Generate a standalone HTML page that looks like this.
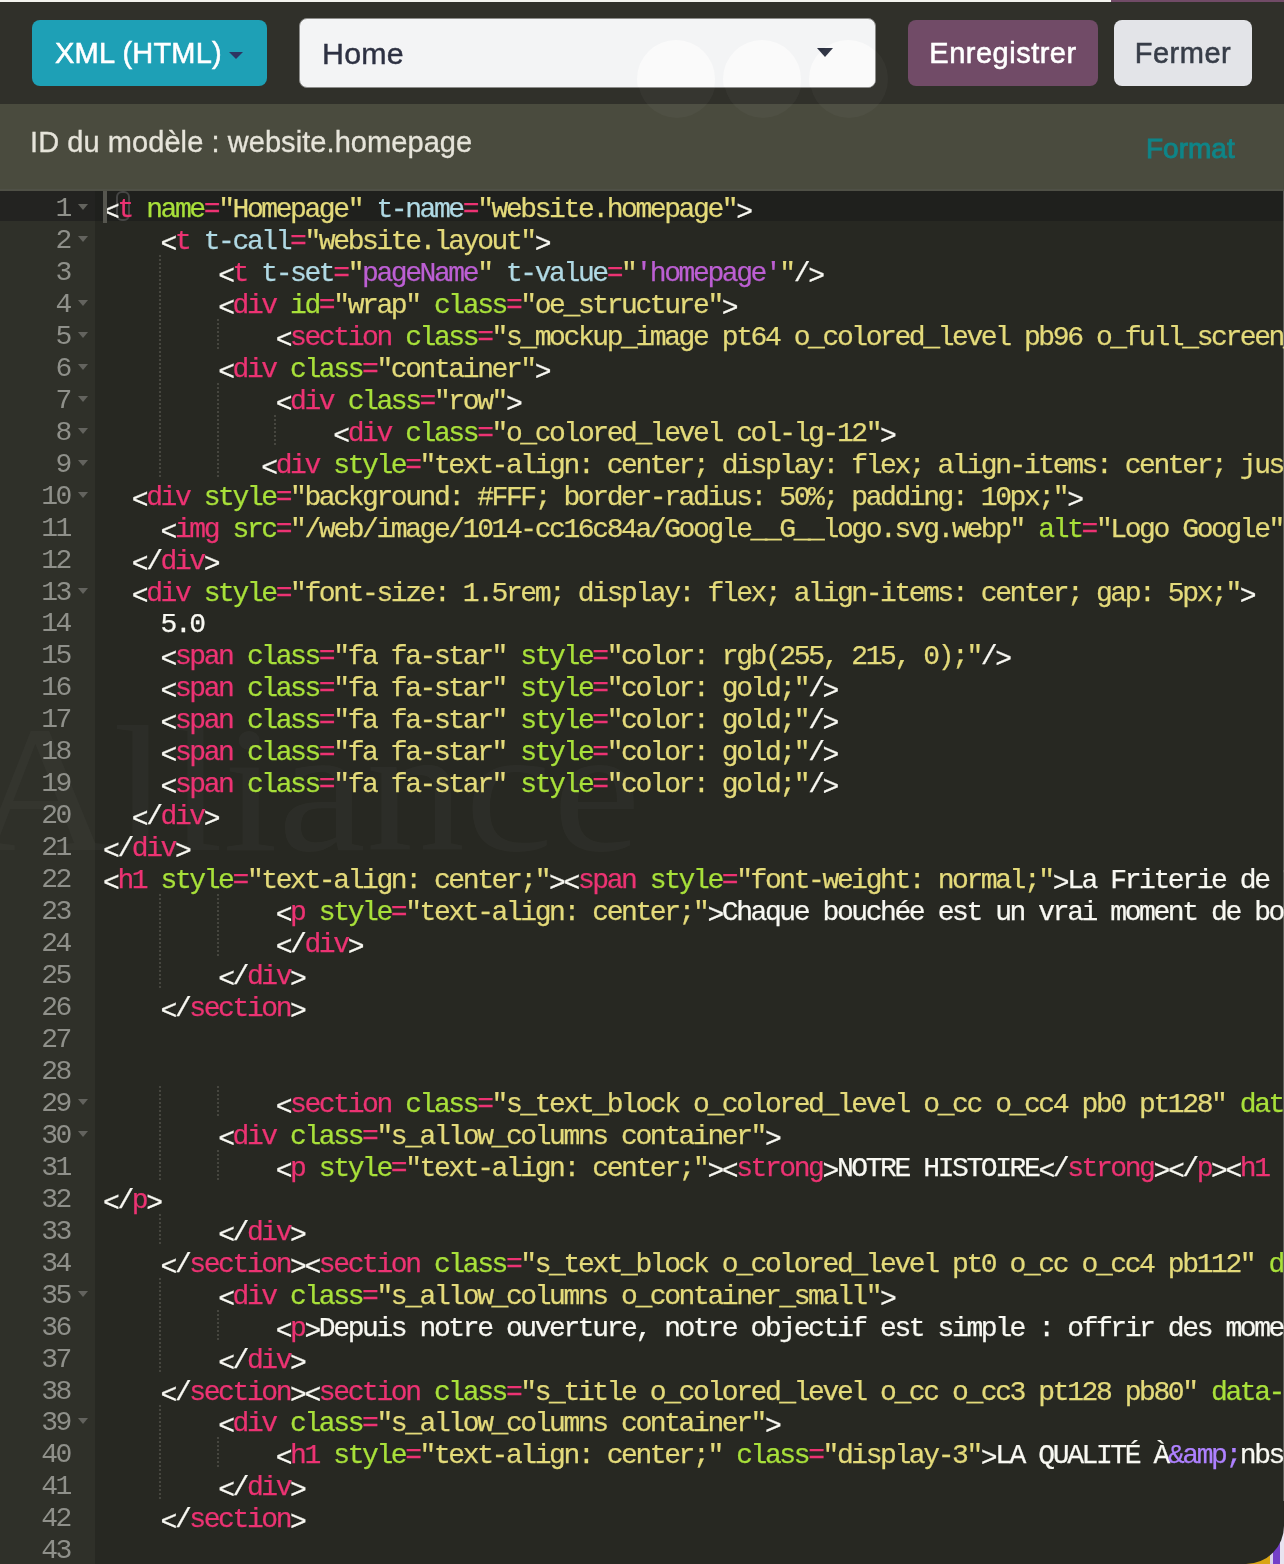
<!DOCTYPE html>
<html><head><meta charset="utf-8">
<style>
html,body{margin:0;padding:0;}
body{width:1284px;height:1564px;overflow:hidden;position:relative;background:#272822;font-family:"Liberation Sans",sans-serif;}
.top{position:absolute;left:0;top:0;width:1284px;height:104px;background:#30302a;}
.sub{position:absolute;left:0;top:104px;width:1284px;height:87px;background:#4a4b3e;}
.subline{position:absolute;left:0;top:189px;width:1284px;height:2px;background:#4f5046;}
.btn{position:absolute;top:20px;height:66px;border-radius:8px;box-sizing:border-box;font-size:29px;line-height:66px;-webkit-text-stroke:0.55px currentColor;}
.b1{left:32px;width:235px;background:#1ea0b6;color:#fff;}
.b1 .lbl{position:absolute;left:23px;top:0;letter-spacing:0.2px;will-change:transform;}
.caret{position:absolute;width:0;height:0;border-left:7px solid transparent;border-right:7px solid transparent;border-top:7px solid #3a3f6a;}
.sel{position:absolute;left:299px;top:18px;width:577px;height:70px;border-radius:8px;background:#f3f4f5;box-sizing:border-box;border:1.5px solid #8c8c8a;overflow:hidden;}
.sel .lbl{position:absolute;left:22px;top:1.5px;line-height:66px;font-size:29px;letter-spacing:0.2px;transform:scaleX(1.047);transform-origin:0 0;color:#2d3142;-webkit-text-stroke:0.4px currentColor;will-change:transform;}
.b2{left:908px;width:190px;background:#714b67;color:#fff;}
.b3{left:1114px;width:138px;background:#e3e4e8;color:#373d48;}
.b2 .lbl,.b3 .lbl{position:absolute;left:0;right:0;text-align:center;letter-spacing:0.5px;will-change:transform;}
.mid{position:absolute;left:30px;top:104px;height:86px;line-height:76px;font-size:29px;letter-spacing:0.07px;color:#e6e4da;-webkit-text-stroke:0.3px currentColor;will-change:transform;}
.fmt{position:absolute;left:1146px;top:104px;height:86px;line-height:90px;font-size:28px;color:#0f8588;-webkit-text-stroke:0.9px currentColor;will-change:transform;}
.gut{position:absolute;left:0;top:191px;width:95px;height:1373px;background:#2f3029;}
.act{position:absolute;left:0;top:191px;width:1284px;height:30px;background:#1f201d;}
.actg{position:absolute;left:0;top:191px;width:95px;height:30px;background:#232321;}
.ln{position:absolute;left:0;width:70px;margin-top:2px;text-align:right;height:32px;line-height:32px;font-family:"Liberation Mono",monospace;font-size:28px;letter-spacing:-2.4px;color:#8f908a;will-change:transform;}
.fd{position:absolute;left:78px;width:0;height:0;margin-top:13px;border-left:5px solid transparent;border-right:5px solid transparent;border-top:6px solid #63635e;}
:root{--x0:103px;--cw:14.387px;}
.cl{position:absolute;left:var(--x0);margin-top:3px;height:32px;line-height:32px;font-family:"Liberation Mono",monospace;font-size:28px;letter-spacing:-2.413px;white-space:pre;color:#F8F8F2;-webkit-text-stroke:0.25px currentColor;will-change:transform;}
.p{color:#F8F8F2}.t{color:#EC3373}.a{color:#A8E03A}.s{color:#E4DA7A}.ta{color:#B0D9E4}.pu{color:#BC5FD3}.am{color:#AE81FF}.x{color:#F8F8F2}.lt{position:relative;top:2.5px}
.ig{position:absolute;width:2px;background:repeating-linear-gradient(to bottom,#46463f 0,#46463f 2px,transparent 2px,transparent 4px);}
.cursor{position:absolute;left:103px;top:191px;width:3.5px;height:32px;background:#56564f;}
.bbox{position:absolute;left:116px;top:191px;width:14px;height:30px;box-sizing:border-box;border:2px solid #464645;border-radius:6px;}
.topline{position:absolute;left:0;top:0;width:1111px;height:2px;background:#f3f3ee;}
.topline2{position:absolute;left:1111px;top:0;width:173px;height:2px;background:#714b67;}
.bgtxt{position:absolute;left:-30px;top:690px;font-family:"Liberation Serif",serif;font-size:180px;line-height:200px;color:rgba(255,255,255,0.028);white-space:nowrap;transform:scaleX(1.1);transform-origin:0 0;}
.ci{position:absolute;top:20.5px;width:78px;height:78px;border-radius:50%;background:#fafafa;}
.circ{position:absolute;width:78px;height:78px;border-radius:50%;top:40px;background:rgba(255,255,255,0.03)}
</style></head><body>
<div class="top"></div>
<div class="topline"></div><div class="topline2"></div>
<div class="btn b1"><span class="lbl">XML (HTML)</span><span class="caret" style="left:197px;top:32px;border-left-width:7.5px;border-right-width:7.5px;border-top:7.5px solid #2e3562"></span></div>
<div class="sel"><div class="ci" style="left:337px"></div><div class="ci" style="left:423px"></div><div class="ci" style="left:509px"></div><span class="lbl">Home</span><span class="caret" style="left:517px;top:29px;border-left-width:8px;border-right-width:8px;border-top:9px solid #2b3040"></span></div>
<div class="btn b2"><span class="lbl">Enregistrer</span></div>
<div class="btn b3"><span class="lbl">Fermer</span></div>
<div class="sub"></div>
<div class="subline"></div>
<div class="mid">ID du modèle : website.homepage</div>
<div class="fmt">Format</div>
<div class="circ" style="left:638px"></div>
<div class="circ" style="left:724px"></div>
<div class="circ" style="left:810px"></div>
<div class="gut"></div>
<div class="act"></div><div class="actg"></div>
<div class="bgtxt">Alliance</div>
<div class="bbox"></div>
<div class="ig" style="left:calc(var(--x0) + 4 * var(--cw) - 1.5px);top:254.92px;height:31.96px"></div>
<div class="ig" style="left:calc(var(--x0) + 4 * var(--cw) - 1.5px);top:286.88px;height:31.96px"></div>
<div class="ig" style="left:calc(var(--x0) + 4 * var(--cw) - 1.5px);top:318.84px;height:31.96px"></div>
<div class="ig" style="left:calc(var(--x0) + 8 * var(--cw) - 1.5px);top:318.84px;height:31.96px"></div>
<div class="ig" style="left:calc(var(--x0) + 4 * var(--cw) - 1.5px);top:350.80px;height:31.96px"></div>
<div class="ig" style="left:calc(var(--x0) + 4 * var(--cw) - 1.5px);top:382.76px;height:31.96px"></div>
<div class="ig" style="left:calc(var(--x0) + 8 * var(--cw) - 1.5px);top:382.76px;height:31.96px"></div>
<div class="ig" style="left:calc(var(--x0) + 4 * var(--cw) - 1.5px);top:414.72px;height:31.96px"></div>
<div class="ig" style="left:calc(var(--x0) + 8 * var(--cw) - 1.5px);top:414.72px;height:31.96px"></div>
<div class="ig" style="left:calc(var(--x0) + 12 * var(--cw) - 1.5px);top:414.72px;height:31.96px"></div>
<div class="ig" style="left:calc(var(--x0) + 4 * var(--cw) - 1.5px);top:446.68px;height:31.96px"></div>
<div class="ig" style="left:calc(var(--x0) + 8 * var(--cw) - 1.5px);top:446.68px;height:31.96px"></div>
<div class="ig" style="left:calc(var(--x0) + 4 * var(--cw) - 1.5px);top:894.12px;height:31.96px"></div>
<div class="ig" style="left:calc(var(--x0) + 8 * var(--cw) - 1.5px);top:894.12px;height:31.96px"></div>
<div class="ig" style="left:calc(var(--x0) + 4 * var(--cw) - 1.5px);top:926.08px;height:31.96px"></div>
<div class="ig" style="left:calc(var(--x0) + 8 * var(--cw) - 1.5px);top:926.08px;height:31.96px"></div>
<div class="ig" style="left:calc(var(--x0) + 4 * var(--cw) - 1.5px);top:958.04px;height:31.96px"></div>
<div class="ig" style="left:calc(var(--x0) + 4 * var(--cw) - 1.5px);top:1085.88px;height:31.96px"></div>
<div class="ig" style="left:calc(var(--x0) + 8 * var(--cw) - 1.5px);top:1085.88px;height:31.96px"></div>
<div class="ig" style="left:calc(var(--x0) + 4 * var(--cw) - 1.5px);top:1117.84px;height:31.96px"></div>
<div class="ig" style="left:calc(var(--x0) + 4 * var(--cw) - 1.5px);top:1149.80px;height:31.96px"></div>
<div class="ig" style="left:calc(var(--x0) + 8 * var(--cw) - 1.5px);top:1149.80px;height:31.96px"></div>
<div class="ig" style="left:calc(var(--x0) + 4 * var(--cw) - 1.5px);top:1213.72px;height:31.96px"></div>
<div class="ig" style="left:calc(var(--x0) + 4 * var(--cw) - 1.5px);top:1277.64px;height:31.96px"></div>
<div class="ig" style="left:calc(var(--x0) + 4 * var(--cw) - 1.5px);top:1309.60px;height:31.96px"></div>
<div class="ig" style="left:calc(var(--x0) + 8 * var(--cw) - 1.5px);top:1309.60px;height:31.96px"></div>
<div class="ig" style="left:calc(var(--x0) + 4 * var(--cw) - 1.5px);top:1341.56px;height:31.96px"></div>
<div class="ig" style="left:calc(var(--x0) + 4 * var(--cw) - 1.5px);top:1405.48px;height:31.96px"></div>
<div class="ig" style="left:calc(var(--x0) + 4 * var(--cw) - 1.5px);top:1437.44px;height:31.96px"></div>
<div class="ig" style="left:calc(var(--x0) + 8 * var(--cw) - 1.5px);top:1437.44px;height:31.96px"></div>
<div class="ig" style="left:calc(var(--x0) + 4 * var(--cw) - 1.5px);top:1469.40px;height:31.96px"></div>
<div class="ln" style="top:191.00px">1</div>
<div class="fd" style="top:191.00px"></div>
<div class="cl" style="top:191.00px"><span class="p lt">&lt;</span><span class="t">t</span><span class="p"> </span><span class="a">name</span><span class="t">=</span><span class="s">"Homepage"</span><span class="p"> </span><span class="ta">t-name</span><span class="t">=</span><span class="s">"website.homepage"</span><span class="p lt">&gt;</span></div>
<div class="ln" style="top:222.96px">2</div>
<div class="fd" style="top:222.96px"></div>
<div class="cl" style="top:222.96px">    <span class="p lt">&lt;</span><span class="t">t</span><span class="p"> </span><span class="ta">t-call</span><span class="t">=</span><span class="s">"website.layout"</span><span class="p lt">&gt;</span></div>
<div class="ln" style="top:254.92px">3</div>
<div class="cl" style="top:254.92px">        <span class="p lt">&lt;</span><span class="t">t</span><span class="p"> </span><span class="ta">t-set</span><span class="t">=</span><span class="s">"</span><span class="pu">pageName</span><span class="s">"</span><span class="p"> </span><span class="ta">t-value</span><span class="t">=</span><span class="s">"</span><span class="pu">'homepage'</span><span class="s">"</span><span class="p">/</span><span class="p lt">&gt;</span></div>
<div class="ln" style="top:286.88px">4</div>
<div class="fd" style="top:286.88px"></div>
<div class="cl" style="top:286.88px">        <span class="p lt">&lt;</span><span class="t">div</span><span class="p"> </span><span class="a">id</span><span class="t">=</span><span class="s">"wrap"</span><span class="p"> </span><span class="a">class</span><span class="t">=</span><span class="s">"oe_structure"</span><span class="p lt">&gt;</span></div>
<div class="ln" style="top:318.84px">5</div>
<div class="fd" style="top:318.84px"></div>
<div class="cl" style="top:318.84px">            <span class="p lt">&lt;</span><span class="t">section</span><span class="p"> </span><span class="a">class</span><span class="t">=</span><span class="s">"s_mockup_image pt64 o_colored_level pb96 o_full_screen_height</span></div>
<div class="ln" style="top:350.80px">6</div>
<div class="fd" style="top:350.80px"></div>
<div class="cl" style="top:350.80px">        <span class="p lt">&lt;</span><span class="t">div</span><span class="p"> </span><span class="a">class</span><span class="t">=</span><span class="s">"container"</span><span class="p lt">&gt;</span></div>
<div class="ln" style="top:382.76px">7</div>
<div class="fd" style="top:382.76px"></div>
<div class="cl" style="top:382.76px">            <span class="p lt">&lt;</span><span class="t">div</span><span class="p"> </span><span class="a">class</span><span class="t">=</span><span class="s">"row"</span><span class="p lt">&gt;</span></div>
<div class="ln" style="top:414.72px">8</div>
<div class="fd" style="top:414.72px"></div>
<div class="cl" style="top:414.72px">                <span class="p lt">&lt;</span><span class="t">div</span><span class="p"> </span><span class="a">class</span><span class="t">=</span><span class="s">"o_colored_level col-lg-12"</span><span class="p lt">&gt;</span></div>
<div class="ln" style="top:446.68px">9</div>
<div class="fd" style="top:446.68px"></div>
<div class="cl" style="top:446.68px">           <span class="p lt">&lt;</span><span class="t">div</span><span class="p"> </span><span class="a">style</span><span class="t">=</span><span class="s">"text-align: center; display: flex; align-items: center; justify</span></div>
<div class="ln" style="top:478.64px">10</div>
<div class="fd" style="top:478.64px"></div>
<div class="cl" style="top:478.64px">  <span class="p lt">&lt;</span><span class="t">div</span><span class="p"> </span><span class="a">style</span><span class="t">=</span><span class="s">"background: #FFF; border-radius: 50%; padding: 10px;"</span><span class="p lt">&gt;</span></div>
<div class="ln" style="top:510.60px">11</div>
<div class="cl" style="top:510.60px">    <span class="p lt">&lt;</span><span class="t">img</span><span class="p"> </span><span class="a">src</span><span class="t">=</span><span class="s">"/web/image/1014-cc16c84a/Google__G__logo.svg.webp"</span><span class="p"> </span><span class="a">alt</span><span class="t">=</span><span class="s">"Logo Google"</span><span class="p"> </span></div>
<div class="ln" style="top:542.56px">12</div>
<div class="cl" style="top:542.56px">  <span class="p lt">&lt;</span><span class="p">/</span><span class="t">div</span><span class="p lt">&gt;</span></div>
<div class="ln" style="top:574.52px">13</div>
<div class="fd" style="top:574.52px"></div>
<div class="cl" style="top:574.52px">  <span class="p lt">&lt;</span><span class="t">div</span><span class="p"> </span><span class="a">style</span><span class="t">=</span><span class="s">"font-size: 1.5rem; display: flex; align-items: center; gap: 5px;"</span><span class="p lt">&gt;</span></div>
<div class="ln" style="top:606.48px">14</div>
<div class="cl" style="top:606.48px">    <span class="x">5.0</span></div>
<div class="ln" style="top:638.44px">15</div>
<div class="cl" style="top:638.44px">    <span class="p lt">&lt;</span><span class="t">span</span><span class="p"> </span><span class="a">class</span><span class="t">=</span><span class="s">"fa fa-star"</span><span class="p"> </span><span class="a">style</span><span class="t">=</span><span class="s">"color: rgb(255, 215, 0);"</span><span class="p">/</span><span class="p lt">&gt;</span></div>
<div class="ln" style="top:670.40px">16</div>
<div class="cl" style="top:670.40px">    <span class="p lt">&lt;</span><span class="t">span</span><span class="p"> </span><span class="a">class</span><span class="t">=</span><span class="s">"fa fa-star"</span><span class="p"> </span><span class="a">style</span><span class="t">=</span><span class="s">"color: gold;"</span><span class="p">/</span><span class="p lt">&gt;</span></div>
<div class="ln" style="top:702.36px">17</div>
<div class="cl" style="top:702.36px">    <span class="p lt">&lt;</span><span class="t">span</span><span class="p"> </span><span class="a">class</span><span class="t">=</span><span class="s">"fa fa-star"</span><span class="p"> </span><span class="a">style</span><span class="t">=</span><span class="s">"color: gold;"</span><span class="p">/</span><span class="p lt">&gt;</span></div>
<div class="ln" style="top:734.32px">18</div>
<div class="cl" style="top:734.32px">    <span class="p lt">&lt;</span><span class="t">span</span><span class="p"> </span><span class="a">class</span><span class="t">=</span><span class="s">"fa fa-star"</span><span class="p"> </span><span class="a">style</span><span class="t">=</span><span class="s">"color: gold;"</span><span class="p">/</span><span class="p lt">&gt;</span></div>
<div class="ln" style="top:766.28px">19</div>
<div class="cl" style="top:766.28px">    <span class="p lt">&lt;</span><span class="t">span</span><span class="p"> </span><span class="a">class</span><span class="t">=</span><span class="s">"fa fa-star"</span><span class="p"> </span><span class="a">style</span><span class="t">=</span><span class="s">"color: gold;"</span><span class="p">/</span><span class="p lt">&gt;</span></div>
<div class="ln" style="top:798.24px">20</div>
<div class="cl" style="top:798.24px">  <span class="p lt">&lt;</span><span class="p">/</span><span class="t">div</span><span class="p lt">&gt;</span></div>
<div class="ln" style="top:830.20px">21</div>
<div class="cl" style="top:830.20px"><span class="p lt">&lt;</span><span class="p">/</span><span class="t">div</span><span class="p lt">&gt;</span></div>
<div class="ln" style="top:862.16px">22</div>
<div class="cl" style="top:862.16px"><span class="p lt">&lt;</span><span class="t">h1</span><span class="p"> </span><span class="a">style</span><span class="t">=</span><span class="s">"text-align: center;"</span><span class="p lt">&gt;</span><span class="p lt">&lt;</span><span class="t">span</span><span class="p"> </span><span class="a">style</span><span class="t">=</span><span class="s">"font-weight: normal;"</span><span class="x lt">&gt;</span><span class="x">La Friterie de Tours</span></div>
<div class="ln" style="top:894.12px">23</div>
<div class="cl" style="top:894.12px">            <span class="p lt">&lt;</span><span class="t">p</span><span class="p"> </span><span class="a">style</span><span class="t">=</span><span class="s">"text-align: center;"</span><span class="x lt">&gt;</span><span class="x">Chaque bouchée est un vrai moment de bonheur</span></div>
<div class="ln" style="top:926.08px">24</div>
<div class="cl" style="top:926.08px">            <span class="p lt">&lt;</span><span class="p">/</span><span class="t">div</span><span class="p lt">&gt;</span></div>
<div class="ln" style="top:958.04px">25</div>
<div class="cl" style="top:958.04px">        <span class="p lt">&lt;</span><span class="p">/</span><span class="t">div</span><span class="p lt">&gt;</span></div>
<div class="ln" style="top:990.00px">26</div>
<div class="cl" style="top:990.00px">    <span class="p lt">&lt;</span><span class="p">/</span><span class="t">section</span><span class="p lt">&gt;</span></div>
<div class="ln" style="top:1021.96px">27</div>
<div class="cl" style="top:1021.96px"></div>
<div class="ln" style="top:1053.92px">28</div>
<div class="cl" style="top:1053.92px"></div>
<div class="ln" style="top:1085.88px">29</div>
<div class="fd" style="top:1085.88px"></div>
<div class="cl" style="top:1085.88px">            <span class="p lt">&lt;</span><span class="t">section</span><span class="p"> </span><span class="a">class</span><span class="t">=</span><span class="s">"s_text_block o_colored_level o_cc o_cc4 pb0 pt128"</span><span class="p"> </span><span class="a">data-n</span></div>
<div class="ln" style="top:1117.84px">30</div>
<div class="fd" style="top:1117.84px"></div>
<div class="cl" style="top:1117.84px">        <span class="p lt">&lt;</span><span class="t">div</span><span class="p"> </span><span class="a">class</span><span class="t">=</span><span class="s">"s_allow_columns container"</span><span class="p lt">&gt;</span></div>
<div class="ln" style="top:1149.80px">31</div>
<div class="cl" style="top:1149.80px">            <span class="p lt">&lt;</span><span class="t">p</span><span class="p"> </span><span class="a">style</span><span class="t">=</span><span class="s">"text-align: center;"</span><span class="p lt">&gt;</span><span class="p lt">&lt;</span><span class="t">strong</span><span class="x lt">&gt;</span><span class="x">NOTRE HISTOIRE</span><span class="p lt">&lt;</span><span class="p">/</span><span class="t">strong</span><span class="p lt">&gt;</span><span class="p lt">&lt;</span><span class="p">/</span><span class="t">p</span><span class="p lt">&gt;</span><span class="p lt">&lt;</span><span class="t">h1</span><span class="p"> </span></div>
<div class="ln" style="top:1181.76px">32</div>
<div class="cl" style="top:1181.76px"><span class="p lt">&lt;</span><span class="p">/</span><span class="t">p</span><span class="p lt">&gt;</span></div>
<div class="ln" style="top:1213.72px">33</div>
<div class="cl" style="top:1213.72px">        <span class="p lt">&lt;</span><span class="p">/</span><span class="t">div</span><span class="p lt">&gt;</span></div>
<div class="ln" style="top:1245.68px">34</div>
<div class="cl" style="top:1245.68px">    <span class="p lt">&lt;</span><span class="p">/</span><span class="t">section</span><span class="p lt">&gt;</span><span class="p lt">&lt;</span><span class="t">section</span><span class="p"> </span><span class="a">class</span><span class="t">=</span><span class="s">"s_text_block o_colored_level pt0 o_cc o_cc4 pb112"</span><span class="p"> </span><span class="a">data-n</span></div>
<div class="ln" style="top:1277.64px">35</div>
<div class="fd" style="top:1277.64px"></div>
<div class="cl" style="top:1277.64px">        <span class="p lt">&lt;</span><span class="t">div</span><span class="p"> </span><span class="a">class</span><span class="t">=</span><span class="s">"s_allow_columns o_container_small"</span><span class="p lt">&gt;</span></div>
<div class="ln" style="top:1309.60px">36</div>
<div class="cl" style="top:1309.60px">            <span class="p lt">&lt;</span><span class="t">p</span><span class="x lt">&gt;</span><span class="x">Depuis notre ouverture, notre objectif est simple : offrir des moments</span></div>
<div class="ln" style="top:1341.56px">37</div>
<div class="cl" style="top:1341.56px">        <span class="p lt">&lt;</span><span class="p">/</span><span class="t">div</span><span class="p lt">&gt;</span></div>
<div class="ln" style="top:1373.52px">38</div>
<div class="cl" style="top:1373.52px">    <span class="p lt">&lt;</span><span class="p">/</span><span class="t">section</span><span class="p lt">&gt;</span><span class="p lt">&lt;</span><span class="t">section</span><span class="p"> </span><span class="a">class</span><span class="t">=</span><span class="s">"s_title o_colored_level o_cc o_cc3 pt128 pb80"</span><span class="p"> </span><span class="a">data-n</span></div>
<div class="ln" style="top:1405.48px">39</div>
<div class="fd" style="top:1405.48px"></div>
<div class="cl" style="top:1405.48px">        <span class="p lt">&lt;</span><span class="t">div</span><span class="p"> </span><span class="a">class</span><span class="t">=</span><span class="s">"s_allow_columns container"</span><span class="p lt">&gt;</span></div>
<div class="ln" style="top:1437.44px">40</div>
<div class="cl" style="top:1437.44px">            <span class="p lt">&lt;</span><span class="t">h1</span><span class="p"> </span><span class="a">style</span><span class="t">=</span><span class="s">"text-align: center;"</span><span class="p"> </span><span class="a">class</span><span class="t">=</span><span class="s">"display-3"</span><span class="x lt">&gt;</span><span class="x">LA QUALITÉ À</span><span class="am">&amp;amp;</span><span class="x">nbsp;</span></div>
<div class="ln" style="top:1469.40px">41</div>
<div class="cl" style="top:1469.40px">        <span class="p lt">&lt;</span><span class="p">/</span><span class="t">div</span><span class="p lt">&gt;</span></div>
<div class="ln" style="top:1501.36px">42</div>
<div class="cl" style="top:1501.36px">    <span class="p lt">&lt;</span><span class="p">/</span><span class="t">section</span><span class="p lt">&gt;</span></div>
<div class="ln" style="top:1533.32px">43</div>
<div class="cl" style="top:1533.32px"></div>
<div class="cursor"></div>
<div style="position:absolute;left:1234px;top:1514px;width:50px;height:50px;background:linear-gradient(90deg,#d9a514 0,#d9a514 72%,#d8d0e8 72%,#d8d0e8 78%,#7440c8 78%,#7440c8 92%,#e8e4f0 92%);"></div>
<div style="position:absolute;left:1204px;top:1484px;width:80px;height:80px;background:#272822;border-bottom-right-radius:38px;"></div>
<div style="position:absolute;left:1282.5px;top:191px;width:1.5px;height:1310px;background:rgba(200,200,195,0.35);"></div>
</body></html>
